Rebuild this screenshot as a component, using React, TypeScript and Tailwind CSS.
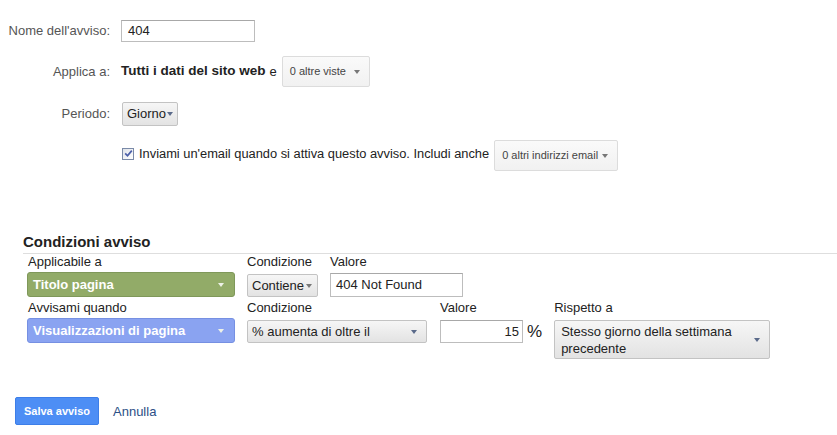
import React from 'react';

function Caret({ color = 'border-t-[#777]' }: { color?: string }) {
  return (
    <span
      className={`inline-block h-0 w-0 border-x-[3.5px] border-t-[4px] border-x-transparent ${color}`}
    />
  );
}

function Label({ children }: { children: React.ReactNode }) {
  return <div className="w-[111px] shrink-0 pr-[1px] text-right text-[13px] text-[#555]">{children}</div>;
}

function LightMenu({ text, width }: { text: string; width: string }) {
  return (
    <div
      className={`flex h-[31px] ${width} items-center justify-between rounded-[2px] border border-[#dcdcdc] bg-linear-to-b from-[#fafafa] to-[#f1f1f1] pl-[7px] pr-[9px] text-[11px] text-[#444]`}
    >
      <span>{text}</span>
      <Caret />
    </div>
  );
}

function GrayMenu({ text, className }: { text: React.ReactNode; className: string }) {
  return (
    <div
      className={`flex justify-between rounded-[2px] border border-[#c3c3c3] bg-linear-to-b from-[#f6f6f6] to-[#e3e3e3] text-[13px] text-[#222] ${className}`}
    >
      {text}
    </div>
  );
}

function ColorMenu({ text, tone }: { text: string; tone: 'green' | 'blue' }) {
  const bg =
    tone === 'green'
      ? 'bg-[#92ab68] border-[#7f985a]'
      : 'bg-[#8aa3f1] border-[#7690e2]';
  return (
    <div
      className={`flex h-[25px] w-[208px] items-center justify-between rounded-[3px] border pl-[5px] pr-[10px] text-[13px] font-bold text-white ${bg}`}
    >
      <span>{text}</span>
      <Caret color="border-t-[#eef2e8]" />
    </div>
  );
}

export default function App() {
  return (
    <div className="h-[435px] w-[837px] bg-white font-['Liberation_Sans',Arial,sans-serif] text-[#222]">
      {/* alert settings */}
      <div className="flex flex-col pt-[20px]">
        <div className="flex items-center">
          <Label>Nome dell'avviso:</Label>
          <div className="ml-[10px] flex h-[22px] w-[134px] items-center border border-[#bdbdbd] border-t-[#a8a8a8] pl-[6px] text-[13px] text-[#222]">
            404
          </div>
        </div>

        <div className="mt-[14px] flex h-[31px] items-center">
          <Label>Applica a:</Label>
          <div className="ml-[10px] flex items-center text-[13px]">
            <span className="text-[13.5px] font-bold text-[#222]">Tutti i dati del sito web</span>
            <span className="ml-[4px]">e</span>
            <div className="ml-[5px]">
              <LightMenu text="0 altre viste" width="w-[88px]" />
            </div>
          </div>
        </div>

        <div className="mt-[15px] flex h-[24px] items-center">
          <Label>Periodo:</Label>
          <GrayMenu
            className="ml-[11px] h-[24px] w-[56px] items-center border-[#b9b9b9] pl-[4px] pr-[4px]"
            text={
              <>
                <span>Giorno</span>
                <Caret color="border-t-[#5a6a8a]" />
              </>
            }
          />
        </div>

        <div className="mt-[14px] flex h-[31px] items-center pl-[122px]">
          <span className="mb-[4px] flex h-[12px] w-[12px] items-center justify-center border border-[#7a8aa8] bg-linear-to-br from-[#dfe3ea] to-white">
            <svg width="9" height="9" viewBox="0 0 9 9">
              <path d="M1.2 4.4 L3.5 6.8 L7.8 1.6" fill="none" stroke="#4a5ea8" strokeWidth="1.7" />
            </svg>
          </span>
          <span className="ml-[5px] mb-[4px] text-[12.85px] text-[#222]">
            Inviami un'email quando si attiva questo avviso. Includi anche
          </span>
          <div className="ml-[5px]">
            <LightMenu text="0 altri indirizzi email" width="w-[124px]" />
          </div>
        </div>
      </div>

      {/* conditions */}
      <div className="mt-[62px] ml-[23px] border-b border-[#dedede] pb-[2px]">
        <div className="text-[15px] leading-[18px] font-bold text-[#222]">Condizioni avviso</div>
      </div>

      <div className="ml-[27px] text-[13px]">
        <div className="flex items-start gap-[12px]">
          <div className="flex flex-col">
            <div className="h-[16px] pl-[1px] leading-[16px]">Applicabile a</div>
            <div className="mt-[2px]">
              <ColorMenu text="Titolo pagina" tone="green" />
            </div>
          </div>
          <div className="flex flex-col">
            <div className="h-[16px] leading-[16px]">Condizione</div>
            <GrayMenu
              className="mt-[4px] h-[23px] w-[71px] items-center pl-[4px] pr-[5px]"
              text={
                <>
                  <span>Contiene</span>
                  <Caret />
                </>
              }
            />
          </div>
          <div className="flex flex-col">
            <div className="h-[16px] leading-[16px]">Valore</div>
            <div className="mt-[3px] flex h-[24px] w-[133px] items-center border border-[#bdbdbd] border-t-[#a8a8a8] pl-[5px]">
              404 Not Found
            </div>
          </div>
        </div>

        <div className="mt-[3px] flex items-start">
          <div className="flex flex-col">
            <div className="h-[16px] pl-[1px] leading-[16px]">Avvisami quando</div>
            <div className="mt-[2px]">
              <ColorMenu text="Visualizzazioni di pagina" tone="blue" />
            </div>
          </div>
          <div className="ml-[12px] flex flex-col">
            <div className="h-[16px] leading-[16px]">Condizione</div>
            <GrayMenu
              className="mt-[4px] h-[23px] w-[180px] items-center pl-[4px] pr-[9px]"
              text={
                <>
                  <span>% aumenta di oltre il</span>
                  <Caret color="border-t-[#5a6a8a]" />
                </>
              }
            />
          </div>
          <div className="ml-[13px] flex flex-col">
            <div className="h-[16px] leading-[16px]">Valore</div>
            <div className="mt-[4px] flex items-center">
              <div className="flex h-[23px] w-[83px] items-center justify-end border border-[#bdbdbd] border-t-[#a8a8a8] pr-[3px]">
                15
              </div>
              <span className="ml-[4px] text-[17px] leading-[20px]">%</span>
            </div>
          </div>
          <div className="ml-[12px] flex flex-col">
            <div className="h-[16px] leading-[16px]">Rispetto a</div>
            <GrayMenu
              className="mt-[4px] h-[39px] w-[216px] items-start border-[#a9a9a9] pt-[2px] pl-[6px] pr-[9px] leading-[17px]"
              text={
                <>
                  <span className="w-[180px]">Stesso giorno della settimana precedente</span>
                  <span className="mt-[6px]">
                    <Caret color="border-t-[#5a6a8a]" />
                  </span>
                </>
              }
            />
          </div>
        </div>
      </div>

      {/* actions */}
      <div className="mt-[38px] ml-[15px] flex items-center">
        <button className="h-[28px] w-[84px] rounded-[2px] border border-[#3d7ee8] bg-[#4d8ef5] text-[11px] font-bold text-white">
          Salva avviso
        </button>
        <span className="ml-[14px] mt-[2px] text-[13px] text-[#2c4f86]">Annulla</span>
      </div>
    </div>
  );
}
